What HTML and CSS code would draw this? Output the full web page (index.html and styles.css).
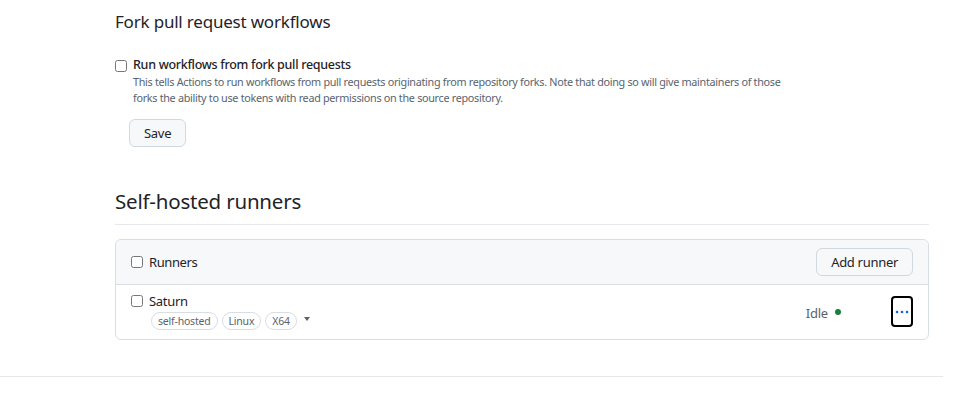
FILE: index.html
```html
<!DOCTYPE HTML>
<html>
<head>
    <title>Actions settings</title>
    <meta name="viewport" content="width=device-width, initial-scale=1">
    <link rel="stylesheet" href="styles.css">
</head>
<body>

    <div class="page">

        <h2 class="subhead">Fork pull request workflows</h2>

        <div class="check-row">
            <input type="checkbox" class="chk" id="forkRuns">
            <div>
                <label for="forkRuns" class="check-label">Run workflows from fork pull requests</label>
                <p class="note">This tells Actions to run workflows from pull requests originating from repository forks. Note that doing so will give maintainers of those forks the ability to use tokens with read permissions on the source repository.</p>
            </div>
        </div>
        <button class="btn save">Save</button>

        <h2 class="section-title">Self-hosted runners</h2>

        <div class="box">
            <div class="box-header">
                <label class="head-label"><input type="checkbox" class="chk"> Runners</label>
                <button class="btn">Add runner</button>
            </div>
            <div class="box-row">
                <input type="checkbox" class="chk">
                <div class="runner">
                    <div class="runner-name">Saturn</div>
                    <div class="labels">
                        <span class="tag">self-hosted</span>
                        <span class="tag">Linux</span>
                        <span class="tag">X64</span>
                        <span class="caret"></span>
                    </div>
                </div>
                <div class="status">Idle <span class="dot"></span></div>
                <button class="kebab">
                    <svg width="16" height="16" viewBox="0 0 16 16" fill="#0969da"><circle cx="3" cy="8" r="1.3"/><circle cx="8" cy="8" r="1.3"/><circle cx="13" cy="8" r="1.3"/></svg>
                </button>
            </div>
        </div>

    </div>
    <hr class="footer-line">

</body>
</html>
```

FILE: styles.css
```css
html {
    font-family: "Noto Sans", "Open Sans", sans-serif;
    color: #1f2328;
    letter-spacing: -0.2px;
}

body {
    margin: 0;
    background: #fff;
}

.page {
    width: 814px;
    margin-left: 115px;
    padding-top: 10px;
}

.subhead {
    font-size: 17px;
    font-weight: 400;
    margin: 0 0 23px 0;
    line-height: 24px;
}

.check-row {
    display: flex;
    align-items: flex-start;
    gap: 6px;
}

.chk {
    width: 12px;
    height: 12px;
    margin: 3px 0 0 0;
}

.check-label {
    display: block;
    font-size: 12.5px;
    font-weight: 500;
    line-height: 16px;
    letter-spacing: -0.3px;
}

.note {
    margin: 1px 0 0 0;
    font-size: 10.8px;
    color: #59636e;
    line-height: 16px;
    max-width: 665px;
    letter-spacing: -0.3px;
}

.btn {
    font-family: inherit;
    font-size: 13px;
    letter-spacing: -0.3px;
    color: #1f2328;
    background: #f6f8fa;
    border: 1px solid #d1d9e0;
    border-radius: 6px;
    height: 28px;
    padding: 0 14px;
}

.save {
    margin: 13px 0 0 14px;
}

.section-title {
    font-size: 20.5px;
    font-weight: 400;
    margin: 40px 0 14px 0;
    padding-bottom: 9px;
    border-bottom: 1px solid #e4e7eb;
    line-height: 28px;
}

.box {
    border: 1px solid #d8dee4;
    border-radius: 6px;
    width: 812px;
}

.box-header {
    display: flex;
    align-items: center;
    justify-content: space-between;
    background: #f6f8fa;
    height: 44px;
    padding: 0 15px;
    border-bottom: 1px solid #d8dee4;
    border-radius: 6px 6px 0 0;
}

.head-label {
    display: flex;
    align-items: center;
    gap: 6px;
    font-size: 13px;
    letter-spacing: -0.4px;
}

.head-label .chk {
    margin: 0;
}

.box-row {
    display: flex;
    align-items: flex-start;
    padding: 7px 15px 9px 15px;
    gap: 6px;
}

.box-row > .chk {
    margin-top: 3px;
}

.runner {
    flex: 1;
}

.runner-name {
    font-size: 13px;
    line-height: 18px;
    letter-spacing: -0.3px;
}

.labels {
    display: flex;
    align-items: center;
    gap: 4px;
    margin: 2px 0 0 2px;
}

.tag {
    font-size: 10.5px;
    color: #59636e;
    border: 1px solid #d8dee4;
    border-radius: 10px;
    padding: 0 6px;
    line-height: 16px;
}

.caret {
    width: 0;
    height: 0;
    border-left: 3px solid transparent;
    border-right: 3px solid transparent;
    border-top: 4px solid #59636e;
    margin: 0 0 4px 3px;
}

.status {
    font-size: 13px;
    color: #59636e;
    margin-top: 12px;
    display: flex;
    align-items: center;
    gap: 7px;
}

.dot {
    width: 6px;
    height: 6px;
    border-radius: 50%;
    background: #1a7f37;
    margin-top: -2px;
}

.kebab {
    margin: 4px 0 0 44px;
    width: 22px;
    height: 31px;
    padding: 0;
    border: 2px solid #000;
    border-radius: 4px;
    background: #fff;
    display: flex;
    align-items: center;
    justify-content: center;
}

.footer-line {
    width: 943px;
    margin: 36px 0 0 0;
    border: 0;
    border-top: 1px solid #e4e7eb;
}
```
